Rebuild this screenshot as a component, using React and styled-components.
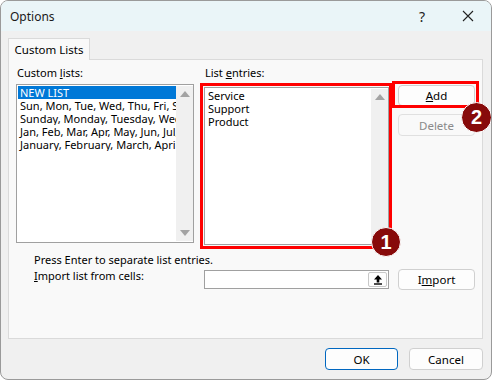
import React from "react";
import styled, { createGlobalStyle } from "styled-components";

const Global = createGlobalStyle`
  html, body { margin: 0; padding: 0; background: #ffffff; }
  * { box-sizing: border-box; }
  body { font-family: "Noto Sans", "Open Sans", sans-serif; font-size: 11px; color: #000; }
`;

const Window = styled.div`
  width: 492px;
  height: 380px;
  background: #f0f0f0;
  border: 1px solid #9a9a9a;
  border-radius: 8px;
  overflow: hidden;
  display: flex;
  flex-direction: column;
`;

const TitleBar = styled.div`
  height: 30px;
  background: #eaf5f8;
  display: flex;
  align-items: center;
  padding-left: 9px;
`;

const Title = styled.div`
  flex: 1;
  font-size: 12px;
  color: #1a1a1a;
`;

const TitleButton = styled.div`
  width: 46px;
  height: 30px;
  display: flex;
  align-items: center;
  justify-content: center;
  font-size: 14px;
  color: #222;
`;

const Body = styled.div`
  flex: 1;
  padding: 7px 8px 0 7px;
  display: flex;
  flex-direction: column;
`;

const TabStrip = styled.div`
  display: flex;
  height: 21px;
`;

const Tab = styled.div`
  width: 82px;
  height: 22px;
  background: #f9f9f9;
  border: 1px solid #dadada;
  border-bottom: none;
  display: flex;
  align-items: center;
  justify-content: center;
  font-size: 11.5px;
  position: relative;
  z-index: 1;
`;

const Panel = styled.div`
  position: relative;
  height: 280px;
  background: #f9f9f9;
  border: 1px solid #dadada;
  padding: 6px 0 0 7px;
  display: flex;
  flex-direction: column;
`;

const TopRow = styled.div`
  display: flex;
  align-items: flex-start;
`;

const Column = styled.div`
  width: ${(p) => p.$w}px;
  margin-right: ${(p) => p.$mr || 0}px;
  display: flex;
  flex-direction: column;
`;

const Label = styled.div`
  height: 14px;
  line-height: 14px;
  padding-left: ${(p) => p.$pl || 0}px;
  white-space: nowrap;
`;

const U = styled.span`
  text-decoration: underline;
  text-underline-offset: 1px;
`;

const ListBox = styled.div`
  margin-top: ${(p) => p.$mt}px;
  height: ${(p) => p.$h}px;
  background: #fff;
  border: 1px solid #a0a0a0;
  display: flex;
  padding: 1px 0 1px 1px;
`;

const ListItems = styled.div`
  flex: 1;
  overflow: hidden;
`;

const Item = styled.div`
  height: 13px;
  line-height: 13px;
  padding-left: 2px;
  white-space: nowrap;
  overflow: hidden;
  background: ${(p) => (p.$sel ? "#0078d7" : "transparent")};
  color: ${(p) => (p.$sel ? "#fff" : "#000")};
`;

const ScrollBar = styled.div`
  width: 17px;
  background: #f0f0f0;
  display: flex;
  flex-direction: column;
  justify-content: space-between;
  align-items: center;
  padding: 5px 0;
`;

const Arrow = styled.div`
  width: 0;
  height: 0;
  border-left: 5px solid transparent;
  border-right: 5px solid transparent;
  ${(p) =>
    p.$down
      ? "border-top: 6px solid #a3a3a3;"
      : "border-bottom: 6px solid #a3a3a3;"}
`;

const ButtonStack = styled.div`
  display: flex;
  flex-direction: column;
  gap: 8px;
  padding-top: 19px;
`;

const Button = styled.div`
  width: ${(p) => p.$w || 77}px;
  height: ${(p) => p.$h || 21}px;
  border-radius: 4px;
  border: 1px solid ${(p) => (p.$default ? "#0067c0" : "#d0d0d0")};
  background: #fdfdfd;
  display: flex;
  align-items: center;
  justify-content: center;
  font-size: 11.5px;
  color: ${(p) => (p.$disabled ? "#8a8a8a" : "#000")};
  ${(p) => (p.$disabled ? "border-color: #e0e0e0; background: #f9f9f9;" : "")}
`;

const Hint = styled.div`
  margin-top: 8px;
  padding-left: 18px;
  height: 14px;
  line-height: 14px;
`;

const ImportRow = styled.div`
  display: flex;
  align-items: flex-start;
  padding-left: 18px;
  margin-top: 2px;
`;

const ImportLabel = styled.div`
  width: 170px;
  line-height: 14px;
  height: 14px;
`;

const RefInput = styled.div`
  width: 185px;
  height: 19px;
  margin-top: 1px;
  background: #fff;
  border: 1px solid #a0a0a0;
  display: flex;
  justify-content: flex-end;
  padding: 1px;
  margin-right: 9px;
`;

const RefButton = styled.div`
  width: 19px;
  height: 15px;
  border: 1px solid #c8c8c8;
  border-radius: 2px;
  background: #fdfdfd;
  display: flex;
  align-items: center;
  justify-content: center;
`;

const Footer = styled.div`
  flex: 1;
  display: flex;
  justify-content: flex-end;
  gap: 11px;
  padding-top: 9px;
`;

const RedBox = styled.div`
  position: absolute;
  left: ${(p) => p.$l}px;
  top: ${(p) => p.$t}px;
  width: ${(p) => p.$w}px;
  height: ${(p) => p.$h}px;
  border: 3px solid #ff0000;
  pointer-events: none;
`;

const Badge = styled.div`
  position: absolute;
  left: ${(p) => p.$l}px;
  top: ${(p) => p.$t}px;
  width: ${(p) => p.$s}px;
  height: ${(p) => p.$s}px;
  border-radius: 50%;
  background: #870a0a;
  border: 1.5px solid #ffffff;
  color: #fff;
  font-family: "Liberation Sans", Arial, sans-serif;
  font-weight: bold;
  font-size: 20px;
  display: flex;
  align-items: center;
  justify-content: center;
  z-index: 2;
`;

const customLists = [
  "NEW LIST",
  "Sun, Mon, Tue, Wed, Thu, Fri, Sat",
  "Sunday, Monday, Tuesday, Wednesday, Thursday, Friday, Saturday",
  "Jan, Feb, Mar, Apr, May, Jun, Jul, Aug, Sep, Oct, Nov, Dec",
  "January, February, March, April, May, June, July",
];

const entries = ["Service", "Support", "Product"];

export default function App() {
  return (
    <>
      <Global />
      <Window>
        <TitleBar>
          <Title>Options</Title>
          <TitleButton>?</TitleButton>
          <TitleButton>
            <svg width="12" height="12" viewBox="0 0 12 12">
              <path d="M1 1 L11 11 M11 1 L1 11" stroke="#222" strokeWidth="1.1" />
            </svg>
          </TitleButton>
        </TitleBar>
        <Body>
          <TabStrip>
            <Tab>Custom Lists</Tab>
          </TabStrip>
          <Panel>
            <TopRow>
              <Column $w={178} $mr={10}>
                <Label $pl={1}>
                  Custom <U>l</U>ists:
                </Label>
                <ListBox $mt={4} $h={159}>
                  <ListItems>
                    {customLists.map((t, i) => (
                      <Item key={i} $sel={i === 0}>
                        {t}
                      </Item>
                    ))}
                  </ListItems>
                  <ScrollBar>
                    <Arrow />
                    <Arrow $down />
                  </ScrollBar>
                </ListBox>
              </Column>
              <Column $w={185} $mr={9}>
                <Label $pl={1}>
                  List <U>e</U>ntries:
                </Label>
                <ListBox $mt={7} $h={158}>
                  <ListItems>
                    {entries.map((t) => (
                      <Item key={t}>{t}</Item>
                    ))}
                  </ListItems>
                  <ScrollBar>
                    <Arrow />
                    <Arrow $down />
                  </ScrollBar>
                </ListBox>
              </Column>
              <ButtonStack>
                <Button>
                  <U>A</U>dd
                </Button>
                <Button $disabled $h={22}>Delete</Button>
              </ButtonStack>
            </TopRow>
            <Hint>Press Enter to separate list entries.</Hint>
            <ImportRow>
              <ImportLabel>
                <U>I</U>mport list from cells:
              </ImportLabel>
              <RefInput>
                <RefButton>
                  <svg width="10" height="11" viewBox="0 0 10 11">
                    <path d="M5 1 L9 5.5 L6.3 5.5 L6.3 8.5 L3.7 8.5 L3.7 5.5 L1 5.5 Z" fill="#000" />
                    <rect x="1" y="9.3" width="8" height="1.4" fill="#000" />
                  </svg>
                </RefButton>
              </RefInput>
              <Button $h={21}>
                I<U>m</U>port
              </Button>
            </ImportRow>
            <RedBox $l={191} $t={23} $w={192} $h={166} />
            <RedBox $l={383} $t={21} $w={87} $h={27} />
            <Badge $l={362} $t={167} $s={30}>1</Badge>
            <Badge $l={452} $t={42} $s={31}>2</Badge>
          </Panel>
          <Footer>
            <Button $default $w={73} $h={22}>OK</Button>
            <Button $w={74} $h={22}>Cancel</Button>
          </Footer>
        </Body>
      </Window>
    </>
  );
}
